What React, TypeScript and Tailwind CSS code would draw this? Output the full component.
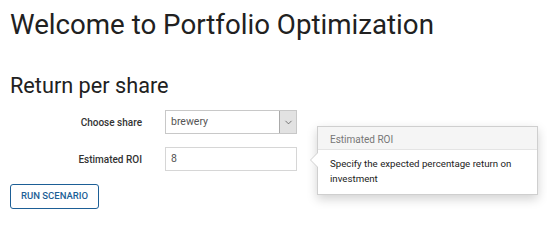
import { ChevronDown } from 'lucide-react';

export default function App() {
  return (
    <div className="relative min-h-[225px] bg-white px-[10px] pt-[7px] font-['Roboto',sans-serif] text-[#212121]">
      <h1 className="text-[27.7px] font-normal leading-[36px]">Welcome to Portfolio Optimization</h1>
      <h2 className="mt-[30px] text-[21.7px] font-normal leading-[26px]">Return per share</h2>

      <div className="mt-[11px] space-y-[13px]">
        <div className="flex items-center">
          <label className="w-[132px] text-right text-[10px] font-medium text-[#333]">Choose share</label>
          <div className="ml-[23px] flex h-[24px] w-[132px] items-stretch border border-[#c8c8c8] bg-white">
            <span className="flex flex-1 items-center pl-[5px] text-[10.5px] text-[#555]">brewery</span>
            <span className="flex w-[17px] items-center justify-center border-l border-[#aaa] bg-[#e2e2e2]">
              <ChevronDown className="h-[11px] w-[11px] text-[#444]" strokeWidth={1.5} />
            </span>
          </div>
        </div>
        <div className="flex items-center">
          <label className="w-[132px] text-right text-[10px] font-medium text-[#333]">Estimated ROI</label>
          <div className="ml-[23px] flex h-[24px] w-[132px] items-center border border-[#d6d6d6] bg-white pl-[5px] text-[10.5px] text-[#555]">
            8
          </div>
        </div>
      </div>

      <button
        className="mt-[13px] h-[25px] w-[89px] rounded-[3px] border border-[#1d5f96] text-[9.5px] font-medium text-[#1d5f96]"
        type="button"
      >
        RUN SCENARIO
      </button>

      <div className="absolute left-[317px] top-[126px] w-[221px] border border-[#cfcfcf] bg-white shadow-[0_4px_10px_rgba(0,0,0,0.18)]">
        <div className="h-[23px] border-b border-[#e4e4e4] bg-[#f5f5f5] px-[12px] pt-[5px] text-[10px] text-[#777]">
          Estimated ROI
        </div>
        <p className="px-[12px] pb-[8px] pt-[6px] text-[9.7px] leading-[15px] text-[#222]">
          Specify the expected percentage return on investment
        </p>
        <span className="absolute left-[-8px] top-[25px] h-0 w-0 border-y-[8px] border-r-[8px] border-y-transparent border-r-[#cfcfcf]" />
        <span className="absolute left-[-7px] top-[25px] h-0 w-0 border-y-[8px] border-r-[8px] border-y-transparent border-r-white" />
      </div>
    </div>
  );
}
